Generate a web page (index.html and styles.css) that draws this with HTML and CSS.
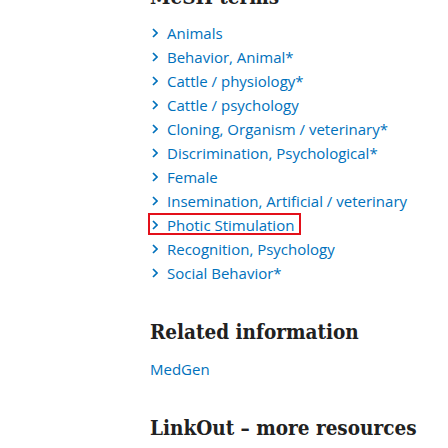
FILE: index.html
```html
<!DOCTYPE html>
<html>
<head>
<meta charset="utf-8">
<link rel="stylesheet" href="styles.css">
</head>
<body>
<main class="page">
  <section class="section">
    <h2 class="heading heading-first">MeSH terms</h2>
    <ul class="terms">
      <li class="term"><a class="term-link" href="#"><svg class="chev" viewBox="0 0 6 10" width="6" height="10"><path d="M1 1 L5 5 L1 9" /></svg><span class="term-text">Animals</span></a></li>
      <li class="term"><a class="term-link" href="#"><svg class="chev" viewBox="0 0 6 10" width="6" height="10"><path d="M1 1 L5 5 L1 9" /></svg><span class="term-text">Behavior, Animal*</span></a></li>
      <li class="term"><a class="term-link" href="#"><svg class="chev" viewBox="0 0 6 10" width="6" height="10"><path d="M1 1 L5 5 L1 9" /></svg><span class="term-text">Cattle / physiology*</span></a></li>
      <li class="term"><a class="term-link" href="#"><svg class="chev" viewBox="0 0 6 10" width="6" height="10"><path d="M1 1 L5 5 L1 9" /></svg><span class="term-text">Cattle / psychology</span></a></li>
      <li class="term"><a class="term-link" href="#"><svg class="chev" viewBox="0 0 6 10" width="6" height="10"><path d="M1 1 L5 5 L1 9" /></svg><span class="term-text">Cloning, Organism / veterinary*</span></a></li>
      <li class="term"><a class="term-link" href="#"><svg class="chev" viewBox="0 0 6 10" width="6" height="10"><path d="M1 1 L5 5 L1 9" /></svg><span class="term-text">Discrimination, Psychological*</span></a></li>
      <li class="term"><a class="term-link" href="#"><svg class="chev" viewBox="0 0 6 10" width="6" height="10"><path d="M1 1 L5 5 L1 9" /></svg><span class="term-text">Female</span></a></li>
      <li class="term"><a class="term-link" href="#"><svg class="chev" viewBox="0 0 6 10" width="6" height="10"><path d="M1 1 L5 5 L1 9" /></svg><span class="term-text">Insemination, Artificial / veterinary</span></a></li>
      <li class="term"><a class="term-link focused" href="#"><svg class="chev" viewBox="0 0 6 10" width="6" height="10"><path d="M1 1 L5 5 L1 9" /></svg><span class="term-text">Photic Stimulation</span></a></li>
      <li class="term"><a class="term-link" href="#"><svg class="chev" viewBox="0 0 6 10" width="6" height="10"><path d="M1 1 L5 5 L1 9" /></svg><span class="term-text">Recognition, Psychology</span></a></li>
      <li class="term"><a class="term-link" href="#"><svg class="chev" viewBox="0 0 6 10" width="6" height="10"><path d="M1 1 L5 5 L1 9" /></svg><span class="term-text">Social Behavior*</span></a></li>
    </ul>
  </section>
  <section class="section">
    <h2 class="heading">Related information</h2>
    <a class="plain-link" href="#">MedGen</a>
  </section>
  <section class="section">
    <h2 class="heading">LinkOut – more resources</h2>
  </section>
</main>
</body>
</html>
```
FILE: styles.css
```css
html, body {
  margin: 0;
  padding: 0;
  background: #ffffff;
}
.page {
  padding-left: 150px;
  font-family: "Open Sans", "Noto Sans", sans-serif;
  color: #212121;
}
.heading {
  font-family: "DejaVu Serif Condensed", "DejaVu Serif", serif;
  font-weight: bold;
  font-size: 20.5px;
  line-height: 28px;
  margin: 0;
  color: #212121;
}
.heading-first {
  margin-top: -17px;
}
.section + .section {
  margin-top: 33px;
}
.terms {
  list-style: none;
  margin: 10px 0 0 0;
  padding: 0;
}
.term {
  display: flex;
  height: 24px;
  font-size: 15px;
}
.term-link {
  display: flex;
  align-items: flex-start;
  height: 22px;
  margin-left: -2px;
  padding: 0 7px 0 4px;
  box-sizing: border-box;
  color: #0071bc;
  text-decoration: none;
}
.chev {
  flex: none;
  margin-top: 7px;
  margin-right: 9px;
  fill: none;
  stroke: #0071bc;
  stroke-width: 1.7;
}
.term-text {
  line-height: 24px;
  white-space: nowrap;
}
.focused {
  outline: 2px solid #e3101a;
  outline-offset: -2px;
}
.plain-link {
  display: block;
  margin-top: 11px;
  font-size: 15px;
  line-height: 24px;
  color: #0071bc;
  text-decoration: none;
}
```
